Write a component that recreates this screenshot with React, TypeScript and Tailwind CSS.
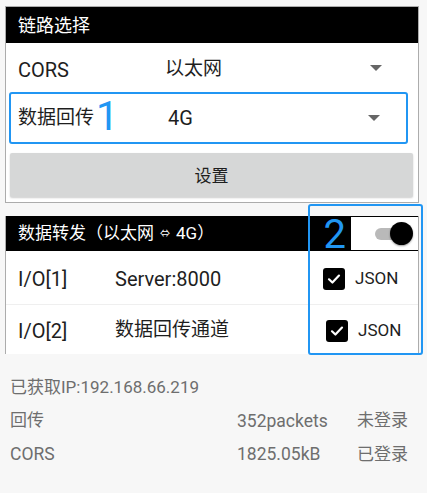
import React from "react";

const font = { fontFamily: 'Roboto, "Noto Sans CJK SC", sans-serif' };

function Caret() {
  return (
    <svg width="12" height="6" viewBox="0 0 12 6" className="block">
      <path d="M0 0 L12 0 L6 6 Z" fill="#666" />
    </svg>
  );
}

function Check() {
  return (
    <div className="w-[22px] h-[22px] bg-black rounded-[3px] flex items-center justify-center">
      <svg width="16" height="16" viewBox="0 0 16 16">
        <path d="M3 8.3 L6.4 11.5 L13 4.6" stroke="#fff" strokeWidth="2.2" fill="none" strokeLinecap="round" strokeLinejoin="round" />
      </svg>
    </div>
  );
}

export default function App() {
  return (
    <div className="relative w-[427px] h-[493px] bg-[#f7f7f7] overflow-hidden text-[#1e1e1e]" style={font}>
      {/* Card 1 */}
      <div className="ml-[5px] mt-[6px] w-[414px] border border-[#acacac] bg-white pb-[5px]">
        <div className="h-[36px] bg-black text-white text-[18px] pl-[12px] pt-[1px] flex items-center">链路选择</div>
        <div className="h-[49px] flex items-center pl-[12px]">
          <div className="w-[147px] pt-[4px] text-[20px]">CORS</div>
          <div className="flex-1 pt-[4px] text-[19px]">以太网</div>
          <div className="mr-[36px]"><Caret /></div>
        </div>
        <div className="ml-[3px] w-[399px] h-[52px] border-2 border-[#2196f3] rounded-[3px] flex items-center pl-[7px]">
          <div className="w-[149px] flex items-center">
            <span className="text-[19px]">数据回传</span>
            <span className="ml-[2px] text-[40px] leading-none text-[#2196f3] mb-[2px]">1</span>
          </div>
          <div className="flex-1 pl-[1px] text-[20px]">4G</div>
          <div className="mr-[26px]"><Caret /></div>
        </div>
        <div className="ml-[4px] mt-[9px] w-[403px] h-[44px] bg-[#d6d7d7] rounded-[2px] shadow-[0_1px_2px_rgba(0,0,0,0.2)] flex items-center justify-center text-[17px] pt-[3px]">
          设置
        </div>
      </div>

      {/* Card 2 */}
      <div className="ml-[5px] mt-[13px] w-[414px] border-x border-[#acacac] bg-white">
        <div className="h-[35px] bg-black flex items-center">
          <div className="flex-1 text-white text-[17px] pl-[12px] flex items-center">
            <span>数据转发（以太网</span>
            <span className="text-[10px] mx-[6px]">⇔</span>
            <span>4G）</span>
          </div>
          <div className="text-[40px] leading-none text-[#2196f3] mr-[5px] mt-[2px]">2</div>
          <div className="w-[67px] h-[33px] bg-white flex items-center justify-end pr-[5px]">
            <div className="relative w-[38px] h-[24px] flex items-center">
              <div className="w-[32px] h-[12px] rounded-full bg-[#b9b9b9]" />
              <div className="absolute right-0 top-0 w-[23px] h-[23px] rounded-full bg-black shadow-[0_1px_2px_rgba(0,0,0,0.4)]" />
            </div>
          </div>
        </div>
        <div className="h-[54px] flex items-center pl-[12px] pt-[3px] border-b border-[#efefef]">
          <div className="w-[97px] text-[20px]">I/O[1]</div>
          <div className="flex-1 text-[20px]">Server:8000</div>
          <div className="w-[95px] flex items-center gap-[10px]">
            <Check />
            <span className="text-[17px]">JSON</span>
          </div>
        </div>
        <div className="h-[49px] flex items-center pl-[12px] pt-[2px]">
          <div className="w-[97px] text-[20px]">I/O[2]</div>
          <div className="flex-1 text-[19px]">数据回传通道</div>
          <div className="w-[92px] flex items-center gap-[10px]">
            <Check />
            <span className="text-[17px]">JSON</span>
          </div>
        </div>
      </div>

      {/* Status */}
      <div className="pl-[10px] pt-[17px] text-[17px] text-[#6e6e6e] flex flex-col">
        <div className="h-[33px] flex items-center">已获取IP:192.168.66.219</div>
        <div className="h-[34px] flex items-center">
          <div className="w-[227px]">回传</div>
          <div className="w-[120px] text-[17.5px]">352packets</div>
          <div>未登录</div>
        </div>
        <div className="h-[33px] flex items-center">
          <div className="w-[227px] text-[17.5px]">CORS</div>
          <div className="w-[120px] text-[17.5px]">1825.05kB</div>
          <div>已登录</div>
        </div>
      </div>

      {/* Annotation box 2 */}
      <div className="absolute left-[308px] top-[204px] w-[115px] h-[151px] border-2 border-[#2196f3] rounded-[3px]" />
    </div>
  );
}
